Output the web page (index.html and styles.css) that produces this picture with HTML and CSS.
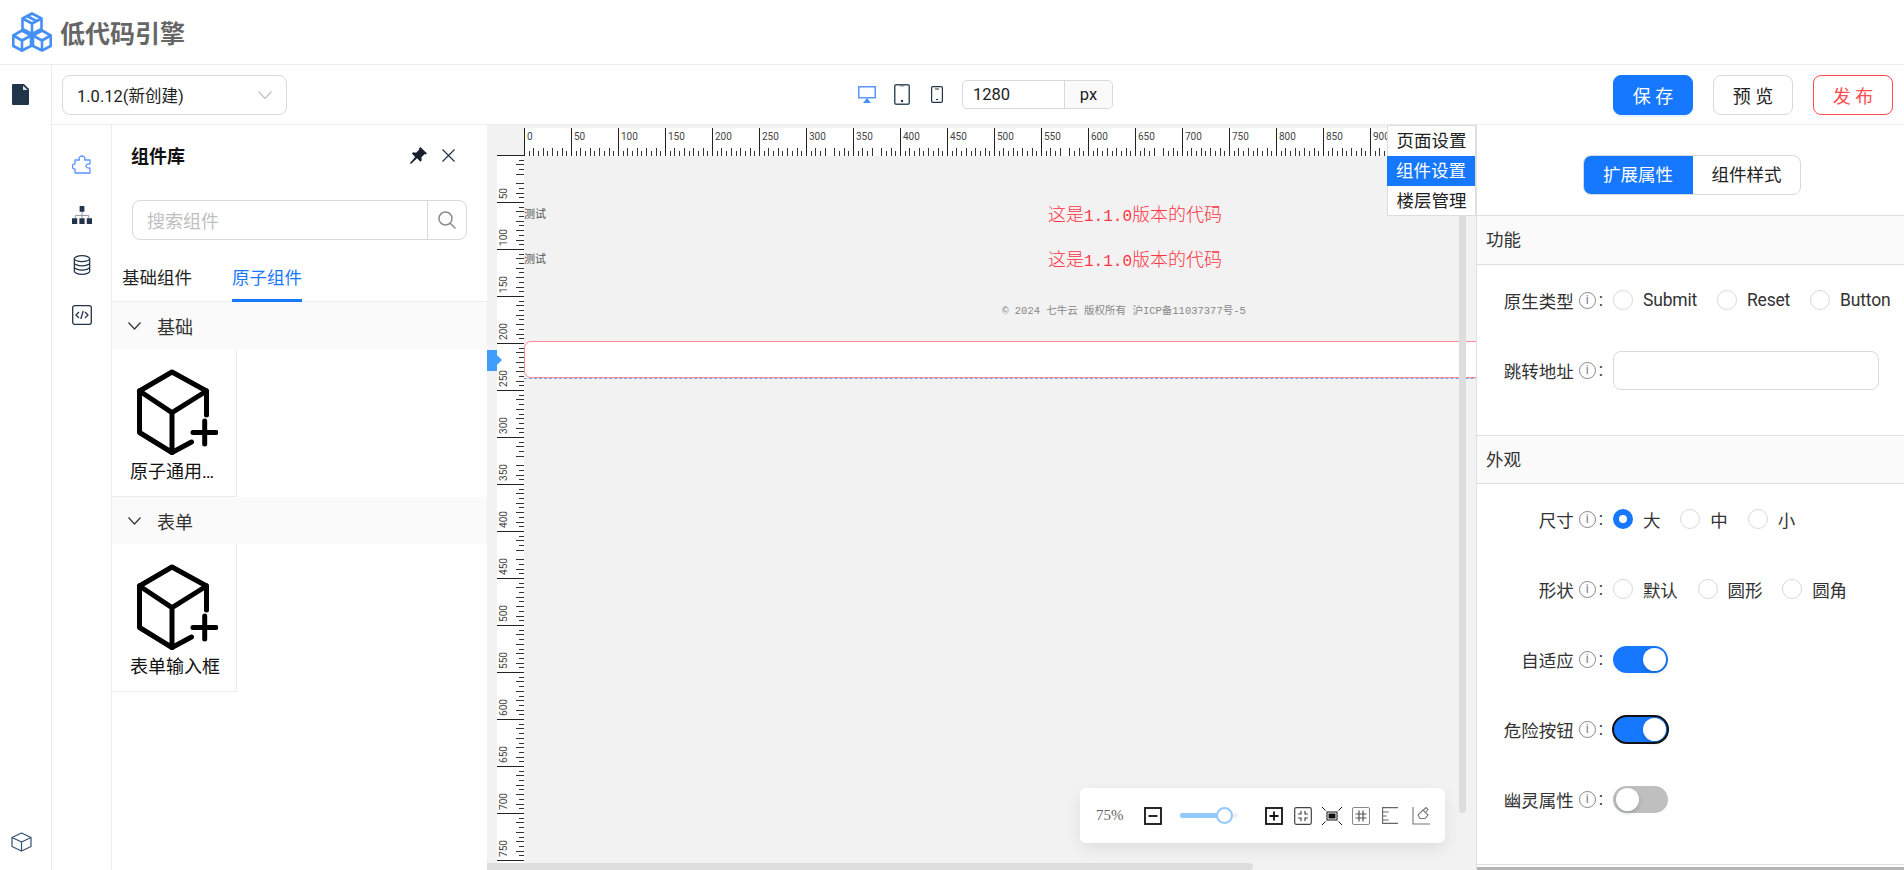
FILE: index.html
```
<!DOCTYPE html>
<html lang="zh-CN">
<head>
<meta charset="utf-8">
<title>低代码引擎</title>
<link rel="stylesheet" href="styles.css">
</head>
<body>

<header class="app-header">
  <svg class="logo" viewBox="0 0 40 40" fill="none" stroke="#4590f8" stroke-width="2.600" stroke-linejoin="round">
    <path d="M20 1.500l9.500 5v10.500L20 22l-9.500-5V6.500z"/><path d="M10.500 6.500l9.500 5 9.500-5M20 11.500V22M15 4l9.500 5"/>
    <path d="M10 18.500l9 5v10.500l-9 4.500-8.700-4.500V23.500z"/><path d="M1.300 23.500l8.700 5 9-5M10 28.500v11"/>
    <path d="M30 18.500l8.700 5v10.500L30 38.500 21 34V23.500z"/><path d="M21 23.500l9 5 8.700-5M30 28.500v10"/>
  </svg>
  <span class="logo-title">低代码引擎</span>
</header>

<div class="app-body">
  <aside class="rail">
    <svg class="rail-file" viewBox="0 0 17 21"><path d="M1 0h11l5 5v15a1 1 0 0 1-1 1H1a1 1 0 0 1-1-1V1a1 1 0 0 1 1-1z" fill="#22344a"/><path d="M11 1.500l4.500 4.500H11z" fill="#dfe3e8"/></svg>
    <svg class="rail-cube" viewBox="0 0 21 20" fill="none" stroke="#34506e" stroke-width="1.200" stroke-linejoin="round"><path d="M10.500 1l9.500 4.500v9L10.500 19 1 14.500v-9z"/><path d="M1 5.500L10.500 10 20 5.500M10.500 10v9"/></svg>
  </aside>

  <div class="workspace">
    <div class="toolbar">
      <div class="version-select">
        <span>1.0.12(新创建)</span>
        <svg viewBox="0 0 14 8" fill="none" stroke="#bfbfbf" stroke-width="1.200"><path d="M.5.500L7 7.500 13.500.500"/></svg>
      </div>
      <div class="devices">
        <svg class="dev-desktop" viewBox="0 0 18 17"><rect x=".75" y=".75" width="16.500" height="11" fill="none" stroke="#5a96ff" stroke-width="1.500"/><path d="M9 12l4 5H5z" fill="#4590f8"/></svg>
        <svg class="dev-tablet" viewBox="0 0 16 21"><rect x=".75" y=".75" width="14.500" height="19.500" rx="1.500" fill="none" stroke="#3d5060" stroke-width="1.500"/><rect x="6" y="1" width="4" height="1.500" fill="#888"/><circle cx="8" cy="17" r="1.200" fill="#22344a"/></svg>
        <svg class="dev-phone" viewBox="0 0 12 17"><rect x=".6" y=".6" width="10.800" height="15.800" rx="1.200" fill="none" stroke="#22344a" stroke-width="1.200"/><path d="M4 3h4M5 13.500h2" stroke="#22344a"/></svg>
        <div class="width-box"><span class="width-val">1280</span><span class="width-unit">px</span></div>
      </div>
      <div class="actions">
        <button class="btn btn-primary">保 存</button>
        <button class="btn">预 览</button>
        <button class="btn btn-danger">发 布</button>
      </div>
    </div>

    <div class="work-row">
      <nav class="side-icons">
        <svg viewBox="0 0 20 20" fill="none" stroke="#5f93ff" stroke-width="1.300" stroke-linejoin="round"><path d="M3 5h4.500c-1-2 0-4 2.500-4s3.500 2 2.500 4H18v4c-2-.500-4 .500-4 2s2 2.500 4 2v5H3v-4c-1.500.500-2.500-1-2.500-2.500S1.500 8.500 3 9z"/></svg>
        <svg viewBox="0 0 21 19"><path d="M10.500 6v4M3.500 13v-3h14v3M10.500 10v3" fill="none" stroke="#8a96a3" stroke-width="1"/><path d="M8 0h5v6H8zM0 13h5.500v6H0zM7.750 13h5.500v6h-5.500zM15.500 13H21v6h-5.500z" fill="#22344a"/></svg>
        <svg viewBox="0 0 16 19" fill="none" stroke="#22344a" stroke-width="1.200"><ellipse cx="8" cy="3.500" rx="7.300" ry="2.800"/><path d="M.7 3.500v12c0 1.500 3.300 2.800 7.300 2.800s7.300-1.300 7.300-2.800v-12M.7 7.500c0 1.500 3.300 2.800 7.300 2.800s7.300-1.300 7.300-2.800M.7 11.500c0 1.500 3.300 2.800 7.300 2.800s7.300-1.300 7.300-2.800"/></svg>
        <svg viewBox="0 0 20 20" fill="none" stroke="#22344a" stroke-width="1.300"><rect x=".7" y=".7" width="18.600" height="18.600" rx="2"/><path d="M7 7l-3 3 3 3M13 7l3 3-3 3M11.200 6l-2.400 8"/></svg>
      </nav>

      <section class="library">
        <div class="lib-head">
          <span class="lib-title">组件库</span>
          <svg class="lib-pin" viewBox="0 0 18 18"><path d="M11 0l7 7-1.500 1-1-.500-3.500 3.500.500 3-1.500 1.500-3.500-3.500L1 18l-1-1 5.500-6.500L2 7l1.500-1.500 3 .500L10 2.500l-.500-1z" fill="#16202c"/></svg>
          <svg class="lib-close" viewBox="0 0 13 13" fill="none" stroke="#22344a" stroke-width="1.200"><path d="M.5.500l12 12M12.500.500l-12 12"/></svg>
        </div>
        <div class="lib-search">
          <span class="lib-placeholder">搜索组件</span>
          <span class="lib-search-btn"><svg viewBox="0 0 18 18" fill="none" stroke="#8c8c8c" stroke-width="1.500"><circle cx="7.500" cy="7.500" r="6.500"/><path d="M12.200 12.200l5.300 5.300"/></svg></span>
        </div>
        <div class="lib-tabs">
          <span>基础组件</span>
          <span class="tab-active">原子组件</span>
        </div>

        <div class="group-head">
          <svg viewBox="0 0 13 8" fill="none" stroke="#333" stroke-width="1.200"><path d="M.5.500l6 6.500 6-6.500"/></svg>
          <span>基础</span>
        </div>
        <div class="group-body">
          <div class="comp-item">
            <svg class="comp-icon" viewBox="0 0 82 88" fill="none" stroke="#000" stroke-width="5" stroke-linecap="round" stroke-linejoin="round"><path d="M70.500 47V23L36 4 3.500 23v41.500L36 84.500 55.500 74"/><path d="M3.500 23L36 44.700 70.500 23M36 44.700v39.800M57 64.600h23M68.700 53v23"/></svg>
            <div class="comp-name">原子通用组件</div>
          </div>
        </div>
        <div class="group-head">
          <svg viewBox="0 0 13 8" fill="none" stroke="#333" stroke-width="1.200"><path d="M.5.500l6 6.500 6-6.500"/></svg>
          <span>表单</span>
        </div>
        <div class="group-body">
          <div class="comp-item">
            <svg class="comp-icon" viewBox="0 0 82 88" fill="none" stroke="#000" stroke-width="5" stroke-linecap="round" stroke-linejoin="round"><path d="M70.500 47V23L36 4 3.500 23v41.500L36 84.500 55.500 74"/><path d="M3.500 23L36 44.700 70.500 23M36 44.700v39.800M57 64.600h23M68.700 53v23"/></svg>
            <div class="comp-name">表单输入框</div>
          </div>
        </div>
      </section>

      <section class="canvas">
        <div class="ruler-top">
          <div class="ruler-corner"></div>
          <span>0</span><span>50</span><span>100</span><span>150</span><span>200</span><span>250</span><span>300</span><span>350</span><span>400</span><span>450</span>
          <span>500</span><span>550</span><span>600</span><span>650</span><span>700</span><span>750</span><span>800</span><span>850</span><span>900</span><span></span>
        </div>
        <div class="canvas-main">
          <div class="ruler-left">
            <span><i>50</i></span><span><i>100</i></span><span><i>150</i></span><span><i>200</i></span><span><i>250</i></span><span><i>300</i></span><span><i>350</i></span><span><i>400</i></span>
            <span><i>450</i></span><span><i>500</i></span><span><i>550</i></span><span><i>600</i></span><span><i>650</i></span><span><i>700</i></span><span><i>750</i></span><span></span>
          </div>
          <div class="stage">
            <div class="stage-row"><span class="stage-tag">测试</span><span class="stage-red">这是<b>1.1.0</b>版本的代码</span></div>
            <div class="stage-row"><span class="stage-tag">测试</span><span class="stage-red">这是<b>1.1.0</b>版本的代码</span></div>
            <div class="stage-foot">© 2024 七牛云 版权所有 沪ICP备11037377号-5</div>
            <div class="stage-selected"><div class="stage-selected-in"></div></div>
          </div>
        </div>

        <div class="drag-handle"></div>
        <div class="scroll-v"></div>
        <div class="scroll-h"></div>

        <ul class="float-menu">
          <li>页面设置</li>
          <li class="menu-on">组件设置</li>
          <li>楼层管理</li>
        </ul>

        <div class="zoom-bar">
          <span class="zoom-val">75%</span>
          <svg class="zb-minus" viewBox="0 0 18 18" fill="none" stroke="#111" stroke-width="1.800"><rect x="1" y="1" width="16" height="16"/><path d="M4.500 9h9"/></svg>
          <div class="zb-slider"><div class="zb-fill"></div><div class="zb-thumb"></div></div>
          <svg class="zb-plus" viewBox="0 0 18 18" fill="none" stroke="#111" stroke-width="1.800"><rect x="1" y="1" width="16" height="16"/><path d="M4.500 9h9M9 4.500v9"/></svg>
          <svg class="zb-fit" viewBox="0 0 18 18" fill="none" stroke="#444" stroke-width="1.200"><rect x=".7" y=".7" width="16.600" height="16.600" rx="1.500"/><path d="M7 4v3H4M11 4v3h3M7 14v-3H4M11 14v-3h3"/></svg>
          <svg class="zb-center" viewBox="0 0 20 18" fill="none" stroke="#111" stroke-width="1"><rect x="5" y="5" width="10" height="8"/><rect x="7" y="7" width="6" height="4" fill="#111"/><path d="M0 0l3.500 3.500M20 0l-3.500 3.500M0 18l3.500-3.500M20 18l-3.500-3.500"/></svg>
          <svg class="zb-grid" viewBox="0 0 18 18" fill="none" stroke="#555" stroke-width="1"><rect x=".5" y=".5" width="17" height="17" rx="1.500" stroke="#888"/><path d="M7 3.500v11M11 3.500v11M3.500 7h11M3.500 11h11" stroke-width="1.200"/></svg>
          <svg class="zb-ruler" viewBox="0 0 16 17" fill="none" stroke="#666" stroke-width="1.100"><path d="M16 .6H.6v15.800H16M.6 5h6M.6 9h4M.6 13h6"/></svg>
          <svg class="zb-brush" viewBox="0 0 18 18" fill="none" stroke="#777" stroke-width="1.100"><path d="M1 0v17h17M6 8l5-5 5 5-3 3.500H8zM11.500 3L14 .5l2 2-2 2.500"/></svg>
        </div>
      </section>

      <section class="props">
        <div class="seg-wrap">
          <div class="seg">
            <span class="seg-on">扩展属性</span>
            <span>组件样式</span>
          </div>
        </div>

        <div class="prop-head">功能</div>
        <div class="prop-body">
          <div class="prop-row">
            <div class="prop-label">原生类型<em class="info">i</em>:</div>
            <label class="radio"><span class="radio-dot"></span>Submit</label>
            <label class="radio"><span class="radio-dot"></span>Reset</label>
            <label class="radio"><span class="radio-dot"></span>Button</label>
          </div>
          <div class="prop-row">
            <div class="prop-label">跳转地址<em class="info">i</em>:</div>
            <div class="prop-input"></div>
          </div>
        </div>

        <div class="prop-head prop-head-b">外观</div>
        <div class="prop-body">
          <div class="prop-row">
            <div class="prop-label">尺寸<em class="info">i</em>:</div>
            <label class="radio"><span class="radio-dot radio-on"></span>大</label>
            <label class="radio"><span class="radio-dot"></span>中</label>
            <label class="radio"><span class="radio-dot"></span>小</label>
          </div>
          <div class="prop-row">
            <div class="prop-label">形状<em class="info">i</em>:</div>
            <label class="radio"><span class="radio-dot"></span>默认</label>
            <label class="radio"><span class="radio-dot"></span>圆形</label>
            <label class="radio"><span class="radio-dot"></span>圆角</label>
          </div>
          <div class="prop-row">
            <div class="prop-label">自适应<em class="info">i</em>:</div>
            <span class="switch switch-on"></span>
          </div>
          <div class="prop-row">
            <div class="prop-label">危险按钮<em class="info">i</em>:</div>
            <span class="switch switch-on switch-focus"></span>
          </div>
          <div class="prop-row">
            <div class="prop-label">幽灵属性<em class="info">i</em>:</div>
            <span class="switch"></span>
          </div>
        </div>
        <div class="prop-end"></div>
      </section>
    </div>
  </div>
</div>

</body>
</html>
```

FILE: styles.css
```
* {box-sizing: border-box}
html, body {height: 100%}
body {margin: 0; overflow: hidden; background: #fff; color: #222; font-family: Roboto, "Noto Sans CJK SC", sans-serif; font-size: 17.5px}
svg {display: block; flex: none}
ul {list-style: none; margin: 0; padding: 0}

/* header */
.app-header {height: 65px; border-bottom: 1px solid #ececec; display: flex; align-items: center; padding-left: 12px; gap: 8px}
.logo {width: 40px; height: 40px}
.logo-title {font-size: 25px; font-weight: 700; color: #666}

.app-body {display: flex; height: 805px}
.rail {width: 52px; border-right: 1px solid #ececec; display: flex; flex-direction: column; justify-content: space-between; padding: 19px 0 18px 11px}
.rail-file {width: 17px; height: 21px; margin-left: 1px}
.rail-cube {width: 21px; height: 20px}

.workspace {flex: 1; min-width: 0; display: flex; flex-direction: column}

/* toolbar */
.toolbar {height: 60px; flex: none; border-bottom: 1px solid #ececec; display: flex; align-items: center; padding: 0 11px 0 10px; position: relative}
.version-select {width: 225px; height: 40px; border: 1px solid #d9d9d9; border-radius: 8px; display: flex; align-items: center; justify-content: space-between; padding: 0 14px 0 14px; font-size: 16.500px}
.version-select svg {width: 14px; height: 8px}
.devices {display: flex; align-items: center; margin-left: 571px}
.dev-desktop {width: 18px; height: 17px}
.dev-tablet {width: 16px; height: 21px; margin-left: 18px}
.dev-phone {width: 12px; height: 17px; margin-left: 21px}
.width-box {display: flex; height: 29px; margin-left: 19px; border: 1px solid #d9d9d9; border-radius: 5px; font-size: 16.500px; line-height: 27px; overflow: hidden}
.width-val {width: 101px; padding-left: 10px}
.width-unit {width: 48px; border-left: 1px solid #d9d9d9; background: #fafafa; text-align: center}
.actions {display: flex; gap: 20px; margin-left: auto}
.btn {width: 80px; height: 40px; background: #fff; border: 1px solid #d9d9d9; border-radius: 8px; font: 18px Roboto, "Noto Sans CJK SC", sans-serif; color: #222; padding: 0}
.btn-primary {background: #1677ff; border-color: #1677ff; color: #fff; box-shadow: 0 2px 0 rgba(5,145,255,.1)}
.btn-danger {border-color: #ff4d4f; color: #ff4d4f}

.work-row {flex: 1; min-height: 0; display: flex}

/* icon column */
.side-icons {width: 60px; flex: none; border-right: 1px solid #ececec; padding: 30px 0 0 20px; display: flex; flex-direction: column; gap: 30px}
.side-icons svg {width: 20px; height: 20px}

/* component library */
.library {width: 375px; flex: none}
.lib-head {display: flex; align-items: center; height: 60px; padding: 0 32px 0 19px}
.lib-title {font-size: 18px; font-weight: 700; color: #111; margin-right: auto}
.lib-pin {width: 17px; height: 17px}
.lib-close {width: 13px; height: 13px; margin-left: 15px}
.lib-search {display: flex; height: 40px; margin: 15px 20px 0; border: 1px solid #d9d9d9; border-radius: 8px; justify-content: space-between}
.lib-placeholder {color: #bfbfbf; font-size: 18px; line-height: 41px; padding-left: 14px}
.lib-search-btn {width: 39px; border-left: 1px solid #d9d9d9; display: flex; align-items: center; justify-content: center}
.lib-search-btn svg {width: 18px; height: 18px}
.lib-tabs {display: flex; gap: 40px; height: 47px; margin-top: 15px; padding-left: 10px; border-bottom: 1px solid #ececec; font-size: 17.500px; line-height: 47px; position: relative}
.lib-tabs span {height: 47px; white-space: nowrap}
.tab-active {color: #1677ff; border-bottom: 3px solid #1677ff}
.group-head {height: 47px; background: #fafafa; display: flex; align-items: center; gap: 16px; padding-left: 16px; color: #333}
.group-head svg {width: 13px; height: 8px}
.group-head span {font-size: 18px}
.comp-item {width: 125px; height: 148px; border-right: 1px solid #ececec; border-bottom: 1px solid #ececec; padding: 19px 0 0 24px}
.comp-icon {width: 82px; height: 88px}
.comp-name {width: 90px; margin: 4px 0 0 -6px; font-size: 18px; line-height: 24px; color: #111; white-space: nowrap; overflow: hidden; text-overflow: ellipsis}

/* canvas */
.canvas {width: 989px; flex: none; background: #f2f2f2; position: relative; overflow: hidden; padding: 3px 0 0 10px}
.ruler-top {display: flex; height: 28px; background: #fff}
.ruler-top span {width: 47px; flex: none; border-left: 1px solid #222; padding: 3px 0 0 2px; font-size: 10px; line-height: 12px; color: #444;
  background:
    repeating-linear-gradient(90deg, transparent 0 3.7px, #333 3.7px 4.7px, transparent 4.7px 9.4px) left bottom / 100% 5px no-repeat,
    repeating-linear-gradient(90deg, transparent 0 8.4px, #333 8.4px 9.4px) left bottom / 100% 8px no-repeat}
.ruler-corner {width: 27px; flex: none; background: #f2f2f2; border-bottom: 1px solid #222}
.canvas-main {display: flex}
.ruler-left {width: 27px; flex: none; background: #fff}
.ruler-left span {display: flex; align-items: flex-end; height: 47px; border-bottom: 1px solid #222; padding: 0 0 3px 2px;
  background:
    repeating-linear-gradient(180deg, transparent 0 3.7px, #333 3.7px 4.7px, transparent 4.7px 9.4px) right top / 5px 100% no-repeat,
    repeating-linear-gradient(180deg, transparent 0 8.4px, #333 8.4px 9.4px) right top / 8px 100% no-repeat}
.ruler-left i {font-style: normal; font-size: 10px; line-height: 10px; color: #444; writing-mode: vertical-rl; transform: rotate(180deg)}
.stage {width: 1200px; flex: none; padding-top: 34px}
.stage-row {display: flex; height: 45px; align-items: center}
.stage-tag {font-size: 11px; color: #555; width: 22px}
.stage-red {flex: 1; text-align: center; font-size: 18px; color: #ff3345; font-family: "Liberation Serif", "Noto Sans CJK SC", serif; font-weight: 300}
.stage-red b {font: 16px "Liberation Mono", monospace}
.stage-foot {height: 61px; line-height: 63px; text-align: center; font-size: 10.500px; color: #888; font-family: "Liberation Mono", "Noto Sans CJK SC", monospace}
.stage-selected {height: 38px; border-bottom: 1px dashed #6aa5ff}
.stage-selected-in {height: 100%; background: #fff; border: 1px solid #ff8a94; border-radius: 7px}

.drag-handle {position: absolute; left: 0; top: 225px; width: 10px; height: 21px; background: #409eff}
.drag-handle::after {content: ""; position: absolute; left: 10px; top: 5px; border-left: 5px solid #409eff; border-top: 5px solid transparent; border-bottom: 5px solid transparent}
.scroll-v {position: absolute; left: 972px; top: 0; width: 7px; height: 688px; background: #ddd; border-radius: 0 0 4px 4px}
.scroll-h {position: absolute; left: 0; bottom: 0; width: 766px; height: 7px; background: #ddd; border-radius: 0 4px 4px 0}

.float-menu {position: absolute; right: 0; top: 0; width: 89px; height: 91px; background: #fff; border: 1px solid #ddd; font-size: 17.500px; line-height: 30px; text-align: center; color: #222}
.float-menu li {height: 30px; white-space: nowrap}
.menu-on {background: #1677ff; color: #fff; margin-left: -1px}

.zoom-bar {position: absolute; left: 593px; bottom: 27px; width: 365px; height: 55px; background: #fff; border-radius: 6px; box-shadow: 0 6px 16px rgba(0,0,0,.08); display: flex; align-items: center; padding-left: 16px}
.zoom-val {width: 28px; font: 15px "Liberation Serif", serif; color: #666}
.zb-minus, .zb-plus {width: 18px; height: 18px}
.zb-minus {margin-left: 20px}
.zb-slider {width: 58px; height: 5px; margin-left: 18px; background: #f0f0f0; border-radius: 3px; position: relative}
.zb-fill {width: 44px; height: 5px; background: #91caff; border-radius: 3px}
.zb-thumb {position: absolute; left: 36px; top: -6px; width: 17px; height: 17px; background: #fff; border: 2px solid #91caff; border-radius: 50%}
.zb-plus {margin-left: 27px}
.zb-fit {width: 18px; height: 18px; margin-left: 11px}
.zb-center {width: 20px; height: 18px; margin-left: 10px}
.zb-grid {width: 18px; height: 18px; margin-left: 10px}
.zb-ruler {width: 16px; height: 17px; margin-left: 12px}
.zb-brush {width: 18px; height: 18px; margin-left: 14px}

/* properties */
.props {flex: 1; min-width: 0; border-left: 1px solid #e0e0e0; display: flex; flex-direction: column}
.seg-wrap {height: 90px; padding: 30px 0 0 106px}
.seg {display: flex; width: 218px; height: 40px; border: 1px solid #d9d9d9; border-radius: 8px; overflow: hidden; line-height: 38px; text-align: center}
.seg span {flex: 1}
.seg .seg-on {flex: none; width: 110px; margin: -1px 0 -1px -1px; background: #1677ff; color: #fff; line-height: 40px}
.prop-head {height: 50px; background: #fafafa; border-top: 1px solid #e0e0e0; border-bottom: 1px solid #e0e0e0; padding-left: 9px; line-height: 49px; color: #333}
.prop-head-b {height: 49px; line-height: 48px}
.prop-body {padding-bottom: 30px}
.prop-row {height: 70px; display: flex; align-items: center; color: #333}
.prop-label {width: 126px; flex: none; margin-right: 10px; display: flex; align-items: center; justify-content: flex-end; white-space: nowrap}
.info {width: 17px; height: 17px; margin: 0 3px 0 5px; border: 1px solid #888; border-radius: 50%; font: 12px/15px Roboto, sans-serif; color: #777; text-align: center}
.radio {display: flex; align-items: center; margin-right: 20px; white-space: nowrap; letter-spacing: -.2px}
.radio-dot {width: 20px; height: 20px; margin-right: 10px; border: 1px solid #d9d9d9; border-radius: 50%; background: #fff}
.radio-on {border: 6px solid #1677ff}
.prop-input {width: 266px; height: 39px; border: 1px solid #d9d9d9; border-radius: 8px}
.switch {width: 55px; height: 27px; border-radius: 14px; background: #bfbfbf; position: relative}
.switch::after {content: ""; position: absolute; left: 3px; top: 2px; width: 23px; height: 23px; background: #fff; border-radius: 50%; box-shadow: 0 2px 4px rgba(0,35,11,.2)}
.switch-on {background: #1677ff}
.switch-on::after {left: 30px}
.switch-focus {outline: 2px solid #111; outline-offset: -1px}
.prop-end {flex: 1; border-top: 1px solid #e0e0e0; border-bottom: 3px solid #b4b4b4}
```
